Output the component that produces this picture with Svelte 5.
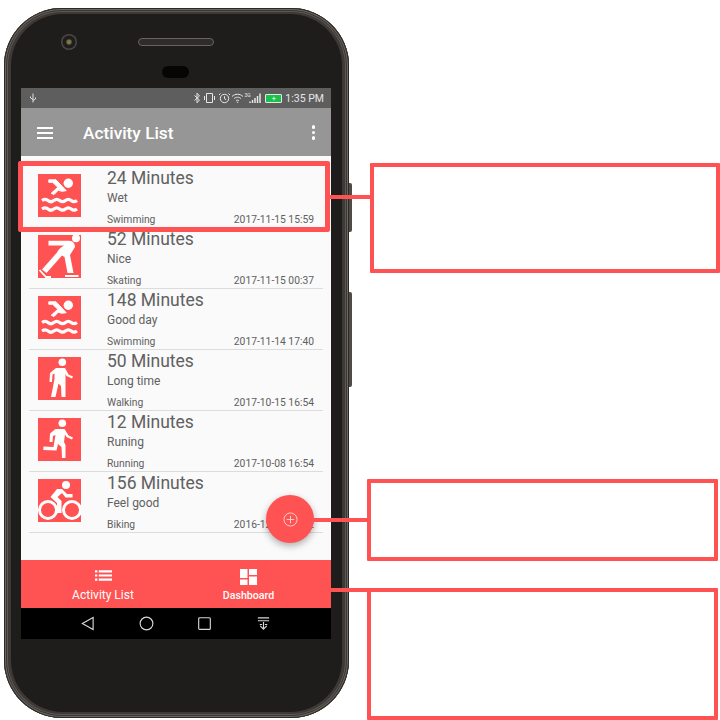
<script>
  // Activity rows shown in the list
  const activities = [
    { mins: 24, note: 'Wet', type: 'Swimming', date: '2017-11-15 15:59', icon: 'swim' },
    { mins: 52, note: 'Nice', type: 'Skating', date: '2017-11-15 00:37', icon: 'skate' },
    { mins: 148, note: 'Good day', type: 'Swimming', date: '2017-11-14 17:40', icon: 'swim' },
    { mins: 50, note: 'Long time', type: 'Walking', date: '2017-10-15 16:54', icon: 'walk' },
    { mins: 12, note: 'Runing', type: 'Running', date: '2017-10-08 16:54', icon: 'run' },
    { mins: 156, note: 'Feel good', type: 'Biking', date: '2016-12-01 12:12', icon: 'bike' }
  ];
</script>

{#snippet activityIcon(name)}
  <svg class="tile" viewBox="0 0 43 43">
    {#if name === 'swim'}
      <circle class="fill" cx="30.300" cy="9.300" r="4.700" />
      <path class="fill fat" d="M10.800 5.800H18L28.200 16.700 23.700 17.300 20.300 16.200 16 20.500 13.200 19.300 19.800 13.300 14.700 8.300H10.800z" />
      <path class="wave" d="M4 26.500c2.300-1.500 4.300-1.500 6 0s4 1.500 5.800 0 4-1.500 5.800 0 4 1.500 5.800 0 4-1.500 5.800 0 3.800 1.500 5.800 0" />
      <path class="wave" d="M4 35c2.300-1.500 4.300-1.500 6 0s4 1.500 5.800 0 4-1.500 5.800 0 4 1.500 5.800 0 4-1.500 5.800 0 3.800 1.500 5.800 0" />
    {:else if name === 'skate'}
      <circle class="fill" cx="38" cy="3.300" r="4" />
      <path class="fill" d="M10.500 5.800H30C34 5 37 8 37 12L32 20 35.500 38H29.500L26.500 22 24 20.500 8.500 38 4 34.500 19 17.500C20 15 22 13 26 10.500H10.500z" />
      <path class="blade" d="M1.500 35 8 42H13M27 41H40.500" />
    {:else if name === 'walk'}
      <circle class="fill" cx="24.300" cy="5.300" r="3.800" />
      <path class="fill" d="M18 11H27L30.500 17.500 35 19.500 34 21.500 28.500 19 27.500 16.500V26L27.500 40H23.500L23 29 20.500 26.500 17.500 40H13L16.500 22V16.500L14.500 17.500 14 25H11.500L12 16z" />
    {:else if name === 'run'}
      <circle class="fill" cx="24.300" cy="5.300" r="3.800" />
      <path class="fill" d="M17.500 11H26.500L30.500 17.500 35 19.500 34 21.500 28.500 19 27 16.500 26 24 27.500 27V40H24L23.500 29 20 26 18.500 32.500 5.300 32 5.500 28.500 15.500 29 17.500 17 15 18 14.500 24H11.500L12 15.500z" />
    {:else}
      <circle class="fill" cx="28" cy="6" r="4" />
      <path class="fill" d="M19 10L12.500 18 19 24V34H23.500V22L19.500 18 24 14 27.500 18.500H34.500V15H29L24 10z" />
      <circle class="ring" cx="10" cy="31" r="8.500" />
      <circle class="ring" cx="34" cy="31" r="8.500" />
    {/if}
  </svg>
{/snippet}

<main class="page">
  <div class="phone">
    <div class="side-btn upper"></div>
    <div class="side-btn lower"></div>
    <div class="bezel">
      <div class="earpiece">
        <span class="camera"></span>
        <span class="speaker"></span>
        <span class="sensor"></span>
      </div>

      <div class="screen">
        <div class="status">
          <svg class="usb" viewBox="0 0 8 10"><path d="M4 .5v9M4 6.500 1.500 5V3.500M4 7.500 6.500 6V4.500" /></svg>
          <div class="status-right">
            <svg class="sicons" viewBox="0 0 69 12">
              <path d="M.5 3.500 5.500 8 3 10.800V1.200L5.500 4 .5 8.500" />
              <path d="M12.500 1.500h6v9h-6zM10.500 4v4M20.500 4v4" />
              <circle cx="30.500" cy="6.500" r="4.200" /><path d="M30.500 4.200v2.500l1.700 1M26.500 1.500 25 3M34.500 1.500 36 3" />
              <path d="M38 4.500c3-3 8-3 11 0M40 6.700c2-2 5-2 7 0M42 8.800c1-1 2-1 3 0" />
              <path class="solid" d="M43.500 11 42.300 9.700h2.400z" />
              <path class="bars" d="M56 11v-1.500M58.500 11V8M61 11V6M63.500 11V4M66 11V1.500" />
              <text x="50.500" y="4.500">3G</text>
            </svg>
            <span class="battery"><i>+</i></span>
            <span class="clock">1:35 PM</span>
          </div>
        </div>

        <header class="toolbar">
          <div class="burger"><span></span><span></span><span></span></div>
          <h1>Activity List</h1>
          <div class="dots"><span></span><span></span><span></span></div>
        </header>

        <section class="content">
          <ul class="list">
            {#each activities as a}
              <li class="row">
                {@render activityIcon(a.icon)}
                <div class="info">
                  <div class="mins">{a.mins} Minutes</div>
                  <div class="note">{a.note}</div>
                  <div class="meta"><span>{a.type}</span><span>{a.date}</span></div>
                </div>
              </li>
            {/each}
          </ul>
          <button class="fab" aria-label="Add">
            <svg viewBox="0 0 16 16"><circle cx="8" cy="8" r="7" /><path d="M8 4v8M4 8h8" /></svg>
          </button>
        </section>

        <nav class="tabs">
          <div class="tab first">
            <svg viewBox="0 0 18 11" class="tab-icon">
              <path d="M0 0h2.500v2.200H0zM0 4.400h2.500v2.200H0zM0 8.800h2.500V11H0zM4 0h14v2.200H4zM4 4.400h14v2.200H4zM4 8.800h14V11H4z" />
            </svg>
            <span class="tab-a">Activity List</span>
          </div>
          <div class="tab second">
            <svg viewBox="0 0 17 16" class="tab-icon big">
              <path d="M0 0h7.500v9H0zM9 0h8v6H9zM0 10.500h7.500V16H0zM9 7.500h8V16H9z" />
            </svg>
            <span class="tab-b">Dashboard</span>
          </div>
        </nav>

        <div class="softkeys">
          <svg viewBox="0 0 16 16"><path d="M14 1.500v13L2.500 8z" /></svg>
          <svg viewBox="0 0 16 16"><circle cx="8" cy="8" r="6.800" /></svg>
          <svg viewBox="0 0 16 16"><rect x="1.800" y="1.800" width="12.400" height="12.400" rx="1" /></svg>
          <svg viewBox="0 0 16 16"><path d="M2 2h12M2 5h12M8 6.500V14M4.500 10.500 8 14l3.500-3.500M4 9h2.500M9.500 9H12" /></svg>
        </div>
      </div>
    </div>
  </div>

  <!-- Callouts drawn over the screenshot -->
  <div class="mark highlight"></div>
  <div class="mark box b1"></div>
  <div class="mark box b2"></div>
  <div class="mark box b3"></div>
  <div class="mark line l1"></div>
  <div class="mark line l2"></div>
  <div class="mark line l3"></div>
</main>

<style>
  :global(body) {
    margin: 0;
    background: #fff;
  }

  .page {
    position: relative;
    width: 720px;
    height: 720px;
    overflow: hidden;
    font-family: Roboto, "Liberation Sans", sans-serif;
  }

  .phone {
    position: absolute;
    left: 4px;
    top: 8px;
    width: 345px;
    height: 710px;
    box-sizing: border-box;
    padding: 6px 7px;
    border-radius: 58px;
    background: #3d3936;
    box-shadow:
      inset 0 0 0 1px #2b2825,
      inset 0 0 0 2px #6d6762,
      inset 0 0 0 3px #3a3633,
      inset 0 0 0 4px #5e5853;
  }

  .side-btn {
    position: absolute;
    right: -3px;
    width: 3px;
    background: #4f4b47;
    border-radius: 0 2px 2px 0;
  }
  .side-btn.upper { top: 175px; height: 49px; }
  .side-btn.lower { top: 284px; height: 95px; }

  .bezel {
    height: 100%;
    box-sizing: border-box;
    padding: 0 10px;
    border-radius: 52px;
    background: #1f1c1c;
    display: flex;
    flex-direction: column;
  }

  .earpiece {
    position: relative;
    height: 74px;
    flex: none;
  }
  .camera {
    position: absolute;
    left: 40px;
    top: 20px;
    width: 16px;
    height: 16px;
    border-radius: 50%;
    background: radial-gradient(circle, #7d7744 0 15%, #201e1c 30% 55%, #4a4745 60%);
  }
  .speaker {
    position: absolute;
    left: 117px;
    top: 24px;
    width: 76px;
    height: 8px;
    box-sizing: border-box;
    border-radius: 4px;
    background: #2e2c2b;
    border: 1px solid #66625f;
  }
  .sensor {
    position: absolute;
    left: 141px;
    top: 52px;
    width: 27px;
    height: 12px;
    border-radius: 6px;
    background: #060505;
  }

  .screen {
    width: 310px;
    height: 551px;
    display: flex;
    flex-direction: column;
    flex: none;
  }

  .status {
    height: 20px;
    flex: none;
    box-sizing: border-box;
    background: #5e5e5e;
    display: flex;
    align-items: center;
    justify-content: space-between;
    padding: 0 7px 0 8px;
    color: #e6e6e6;
  }
  .usb {
    width: 8px;
    height: 10px;
    fill: none;
    stroke: #e0e0e0;
    stroke-width: 1;
  }
  .status-right {
    display: flex;
    align-items: center;
  }
  .sicons {
    width: 69px;
    height: 12px;
    margin-right: 2px;
    fill: none;
    stroke: #e6e6e6;
    stroke-width: 1;
  }
  .sicons .solid { fill: #e6e6e6; stroke: none; }
  .sicons .bars { stroke-width: 1.500; }
  .sicons text {
    font-size: 5px;
    fill: #e6e6e6;
    stroke: none;
  }
  .battery {
    width: 15px;
    height: 7px;
    background: #19c24a;
    border: 1px solid #e6e6e6;
    border-radius: 1px;
    display: flex;
    align-items: center;
    justify-content: center;
  }
  .battery i {
    font-style: normal;
    font-size: 8px;
    line-height: 7px;
    color: #fff;
  }
  .clock {
    font-size: 10.500px;
    margin-left: 3px;
  }

  .toolbar {
    height: 48px;
    flex: none;
    background: #969696;
    display: flex;
    align-items: center;
    color: #fff;
    box-sizing: border-box;
    padding: 2px 16px 0;
  }
  .burger {
    width: 16px;
    display: flex;
    flex-direction: column;
    gap: 3px;
  }
  .burger span {
    height: 2px;
    background: #fff;
  }
  h1 {
    margin: 0 0 0 30px;
    font-size: 17.300px;
    font-weight: 500;
    flex: 1;
  }
  .dots {
    display: flex;
    flex-direction: column;
    gap: 2px;
    margin-top: -1px;
  }
  .dots span {
    width: 3.500px;
    height: 3.500px;
    border-radius: 50%;
    background: #fff;
  }

  .content {
    position: relative;
    flex: 1;
    min-height: 0;
    background: #fafafa;
    padding-top: 11px;
  }
  .list {
    list-style: none;
    margin: 0;
    padding: 0 8px;
  }
  .row {
    height: 60px;
    border-bottom: 1px solid #dcdcdc;
    display: flex;
    align-items: flex-start;
    padding-left: 9px;
    color: #606060;
  }
  .tile {
    width: 43px;
    height: 43px;
    margin-top: 7px;
    flex: none;
    background: #ff5252;
    fill: none;
    stroke: #fff;
  }
  .tile .fill {
    fill: #fff;
    stroke: none;
  }
  .tile .fat {
    stroke: #fff;
    stroke-width: 1;
  }
  .tile .wave {
    stroke-width: 3.200;
  }
  .tile .blade {
    stroke-width: 1.800;
  }
  .tile .ring {
    stroke-width: 3;
  }
  .info {
    flex: 1;
    margin-left: 26px;
    padding-right: 9px;
    display: flex;
    flex-direction: column;
  }
  .mins {
    font-size: 17.500px;
    line-height: 22px;
    height: 22px;
  }
  .note {
    font-size: 12px;
    line-height: 16px;
    margin-top: 1px;
  }
  .meta {
    font-size: 10.300px;
    line-height: 14px;
    margin-top: 7px;
    display: flex;
    justify-content: space-between;
  }

  .fab {
    position: absolute;
    right: 17px;
    top: 339px;
    width: 48px;
    height: 48px;
    padding: 0;
    border: none;
    border-radius: 50%;
    background: #ff5252;
    box-shadow: 0 3px 7px rgba(0, 0, 0, 0.3);
    display: flex;
    align-items: center;
    justify-content: center;
  }
  .fab svg {
    width: 15px;
    height: 15px;
    fill: none;
    stroke: #f5d5d5;
    stroke-width: 1;
  }

  .tabs {
    height: 48px;
    flex: none;
    background: #ff5252;
    display: grid;
    grid-template-columns: 1fr 1fr;
    color: #fff;
  }
  .tab {
    display: flex;
    flex-direction: column;
    align-items: center;
    padding-top: 10px;
    box-sizing: border-box;
  }
  .tab.first { padding-left: 9px; }
  .tab.second { padding-right: 10px; }
  .tab-icon {
    width: 17px;
    height: 11px;
    fill: #fff;
  }
  .tab-icon.big {
    height: 16px;
    margin-top: -1px;
  }
  .tab-a {
    font-size: 12px;
    line-height: 14px;
    margin-top: 7px;
  }
  .tab-b {
    font-size: 10.600px;
    font-weight: 500;
    line-height: 14px;
    margin-top: 4px;
  }

  .softkeys {
    height: 31px;
    flex: none;
    box-sizing: border-box;
    background: #000;
    display: flex;
    align-items: center;
    padding-left: 59px;
    gap: 43.700px;
  }
  .softkeys svg {
    width: 15px;
    height: 15px;
    fill: none;
    stroke: #d8d8d8;
    stroke-width: 1.200;
  }

  .mark {
    position: absolute;
    box-sizing: border-box;
    pointer-events: none;
  }
  .highlight {
    left: 18px;
    top: 161px;
    width: 312px;
    height: 71px;
    border: 5px solid #ff5252;
    border-radius: 2px;
  }
  .box {
    border: 4px solid #ff5252;
    border-radius: 1px;
  }
  .b1 { left: 370px; top: 163px; width: 350px; height: 110px; }
  .b2 { left: 367px; top: 479px; width: 351px; height: 82px; }
  .b3 { left: 367px; top: 588px; width: 351px; height: 132px; }
  .line {
    height: 4px;
    background: #ff5252;
  }
  .l1 { left: 330px; top: 195px; width: 41px; }
  .l2 { left: 313px; top: 518px; width: 55px; }
  .l3 { left: 331px; top: 588px; width: 37px; }
</style>
